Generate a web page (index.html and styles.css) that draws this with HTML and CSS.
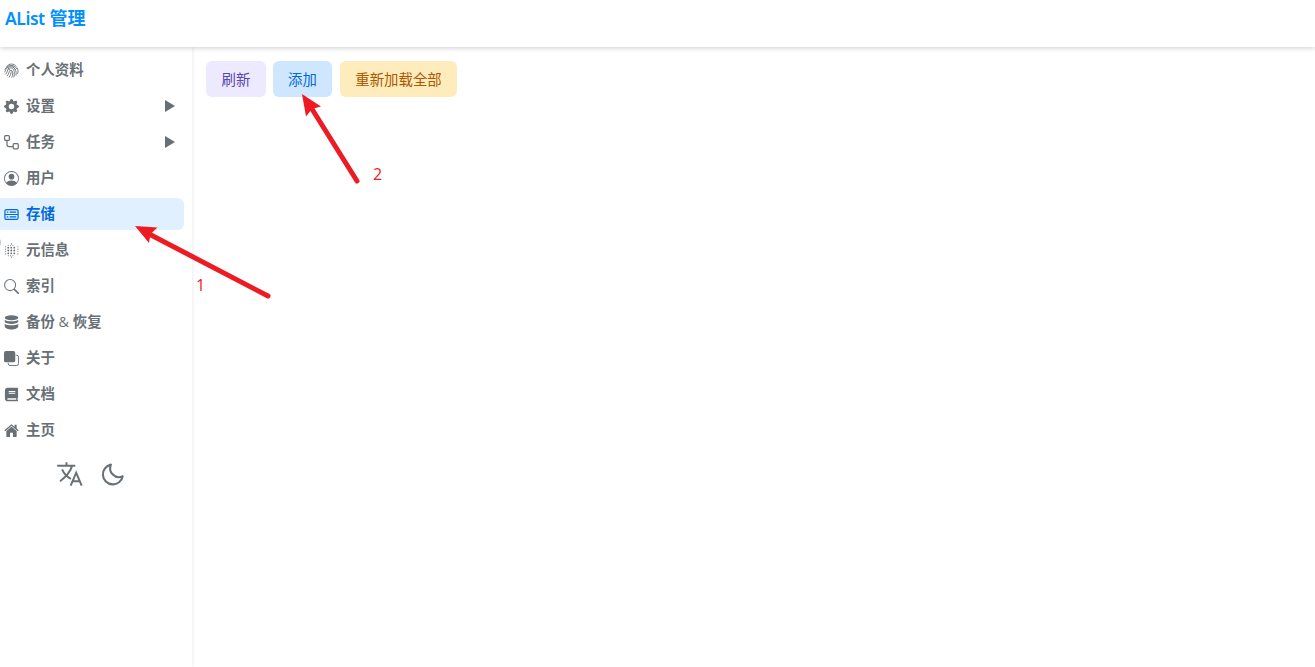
FILE: index.html
```
<!DOCTYPE html>
<html lang="zh-CN">
<head>
  <meta charset="UTF-8" />
  <meta name="viewport" content="width=device-width, initial-scale=1.0" />
  <title>AList 管理</title>
  <link rel="stylesheet" href="styles.css">
</head>
<body>
  <header class="header">
    <span class="title"><span class="brand">AList</span> 管理</span>
  </header>
  <div class="layout">
    <nav class="sidebar">
      <a class="item">
        <svg viewBox="0 0 16 16" fill="none" stroke="currentColor" stroke-width=".95" stroke-linecap="round"><path d="M3 3.600C5 .2 11 .2 13 3.600M1.200 6.500C3.500 1.500 11 1 13.500 6M.9 9.500C2 3 9.500 2 12 7c1 2 1.200 4 .8 6M1.700 12c2.300-1.500 1.500-4.500 3.300-6 3-2 5.800.3 6 4.300.1 2 0 3.300-.5 4.700M3.200 13.800c2.700-2 1.600-4.700 3.100-5.800 1.700-.9 2.900.5 3 2.600 0 1.800-.3 3.300-.9 4.600M5.500 15c1.600-2 2-4 2.200-5.800M14.300 5.500c.9 2 .9 4 .2 5.700M4 4.500l2 3M9 3l3 4"/></svg>
        <span>个人资料</span>
      </a>
      <a class="item">
        <svg viewBox="0 0 16 16" fill="currentColor"><path fill-rule="evenodd" d="M9.405 1.050c-.413-1.400-2.397-1.400-2.810 0l-.1.340a1.464 1.464 0 0 1-2.105.872l-.310-.170c-1.283-.698-2.686.705-1.987 1.987l.169.311c.446.820.023 1.841-.872 2.105l-.340.100c-1.400.413-1.400 2.397 0 2.810l.340.100a1.464 1.464 0 0 1 .872 2.105l-.170.310c-.698 1.283.705 2.686 1.987 1.987l.311-.169a1.464 1.464 0 0 1 2.105.872l.100.340c.413 1.400 2.397 1.400 2.810 0l.100-.340a1.464 1.464 0 0 1 2.105-.872l.310.170c1.283.698 2.686-.705 1.987-1.987l-.169-.311a1.464 1.464 0 0 1 .872-2.105l.340-.100c1.400-.413 1.400-2.397 0-2.810l-.340-.100a1.464 1.464 0 0 1-.872-2.105l.170-.310c.698-1.283-.705-2.686-1.987-1.987l-.311.169a1.464 1.464 0 0 1-2.105-.872zM8 10.930a2.929 2.929 0 1 1 0-5.860 2.929 2.929 0 0 1 0 5.858z"/></svg>
        <span>设置</span>
        <i class="caret"></i>
      </a>
      <a class="item">
        <svg viewBox="0 0 16 16" fill="none" stroke="currentColor" stroke-width="1.300"><rect x=".7" y=".7" width="5" height="5" rx="1"/><rect x="9.800" y="9.300" width="5.400" height="5.400" rx="1"/><path d="M3.200 5.700v4.400a2.200 2.200 0 0 0 2.200 2.200h4.400"/></svg>
        <span>任务</span>
        <i class="caret"></i>
      </a>
      <a class="item">
        <svg viewBox="0 0 16 16" fill="currentColor"><path d="M11 6a3 3 0 1 1-6 0 3 3 0 0 1 6 0z"/><path fill-rule="evenodd" d="M0 8a8 8 0 1 1 16 0A8 8 0 0 1 0 8zm8-7a7 7 0 0 0-5.468 11.370C3.242 11.226 4.805 10 8 10s4.757 1.225 5.468 2.370A7 7 0 0 0 8 1z"/></svg>
        <span>用户</span>
      </a>
      <a class="item active">
        <svg viewBox="0 0 16 16" fill="none" stroke="currentColor" stroke-width="1.300"><rect x="1" y="2.700" width="14" height="10.600" rx="1.500"/><path d="M1 8h14M3 5.400h1.600M6 5.400h7M3 10.600h1.600M6 10.600h7"/></svg>
        <span>存储</span>
      </a>
      <a class="item">
        <svg viewBox="0 0 16 16" fill="none" stroke="currentColor" stroke-linecap="round"><path d="M4.500 5h7.500M4.500 8h7.500M4.500 11h7.500" stroke-width="1.900" stroke-dasharray=".1 3.100"/><path d="M1.500 4v8M14.800 4v8M4.500 2.500h7.500M4.500 13.600h7.500M8 .9v.1M8 15v.1" stroke-width="1.100" stroke-dasharray=".1 2.400"/></svg>
        <span>元信息</span>
      </a>
      <a class="item">
        <svg viewBox="0 0 16 16" fill="none" stroke="currentColor"><circle cx="6.500" cy="6.500" r="5.900" stroke-width="1.100"/><path d="M11 11l4.200 4.200" stroke-width="1.800" stroke-linecap="round"/></svg>
        <span>索引</span>
      </a>
      <a class="item">
        <svg viewBox="0 0 16 16" fill="currentColor"><ellipse cx="8" cy="3" rx="7.200" ry="2.700"/><path d="M.8 5c2 2.200 12.400 2.200 14.400 0v2.300c-1 3-13.400 3-14.400 0z"/><path d="M.8 9.200c2 2.200 12.400 2.200 14.400 0v3c-1 4.200-13.400 4.200-14.400 0z"/></svg>
        <span>备份 <span class="amp">&amp;</span> 恢复</span>
      </a>
      <a class="item">
        <svg viewBox="0 0 16 16"><rect width="12" height="12" rx="2" fill="currentColor"/><path d="M12.500 4.500h1a2 2 0 0 1 2 2v7a2 2 0 0 1-2 2h-7a2 2 0 0 1-2-2v-1" fill="none" stroke="currentColor"/></svg>
        <span>关于</span>
      </a>
      <a class="item">
        <svg viewBox="0 0 16 16" fill="currentColor"><path fill-rule="evenodd" d="M4 .8h10.200q.8 0 .8.800v9.600q0 .5-.5.8v1.900q.5.100.5.700t-.7.600H4a3 3 0 0 1-3-3V3.800a3 3 0 0 1 3-3zM5 4.200v1h7v-1zM5 6.200v1h7v-1zM4 12a1 1 0 0 0 0 1.700h9V12z"/></svg>
        <span>文档</span>
      </a>
      <a class="item">
        <svg viewBox="0 0 16 16" fill="currentColor"><path d="M8 4l5.500 4.600v5.500q0 .8-.8.8H9.600v-4.500H6.400v4.500H3.300q-.8 0-.8-.8V8.600z"/><path d="M.8 8.300L8 2.200l7.200 6.100" fill="none" stroke="currentColor" stroke-width="1.500"/><path d="M11.300 1.800h2.200v5l-2.200-2z"/></svg>
        <span>主页</span>
      </a>
      <div class="tools">
        <svg class="tool" viewBox="0 0 24 24" fill="none" stroke="currentColor" stroke-width="1.700"><path d="M1 5h15.500M9 2v3M13.800 5C12.500 10 8.500 14.500 3.500 18.200M5.200 8c1.500 3.400 4.200 6.300 7.600 8.300M12.600 22L17.300 10.900 22 22M14.200 18.200h6.200"/></svg>
        <svg class="tool moon" viewBox="0 0 24 24" fill="none" stroke="currentColor" stroke-width="2" stroke-linejoin="round"><path d="M10.500 2.500A9.600 9.600 0 1 0 21.800 13.700Q16.500 16.200 12.300 12T10.500 2.500z"/></svg>
      </div>
    </nav>
    <main class="main">
      <button class="btn refresh">刷新</button>
      <button class="btn add">添加</button>
      <button class="btn reload">重新加载全部</button>
    </main>
  </div>
  <div class="handle"></div>
  <svg class="arrows" viewBox="0 0 1315 667" fill="#ed1c24" stroke="#ed1c24">
    <path d="M357 181L312 109M268 296L151 235" stroke-width="5" stroke-linecap="round"/>
    <path d="M302 94l19 12.500-9 2.500-6 7.500zM135 226l22.500 1.500-7 6.500-1.500 9z" stroke="none"/>
  </svg>
  <span class="mark mark-1">1</span>
  <span class="mark mark-2">2</span>
</body>
</html>
```
FILE: styles.css
```
* {
  box-sizing: border-box;
}
body {
  margin: 0;
  height: 100vh;
  display: flex;
  flex-direction: column;
  overflow: hidden;
  background: #fff;
  color: #687076;
  font-family: 'Open Sans', 'Noto Sans CJK SC', sans-serif;
  font-size: 14.4px;
}
.header {
  position: relative;
  z-index: 1;
  height: 47px;
  flex-shrink: 0;
  padding: 4px 5px;
  background: #fff;
  box-shadow: 0 1px 5px rgba(0, 0, 0, 0.2);
}
.title {
  display: block;
  color: #0091ff;
  font-family: 'Noto Sans', 'Noto Sans CJK SC', sans-serif;
  font-size: 18px;
  font-weight: 700;
  line-height: 28px;
}
.brand {
  font-weight: 600;
  font-size: 17.5px;
  letter-spacing: -0.45px;
}
.layout {
  flex: 1;
  display: flex;
}
.sidebar {
  width: 192px;
  padding: 7px 8px 0 0;
  display: flex;
  flex-direction: column;
  gap: 4px;
  box-shadow: 1px 0 3px rgba(0, 0, 0, 0.07);
}
.item {
  height: 32px;
  padding: 0 9px 0 4px;
  display: flex;
  align-items: center;
  gap: 7px;
  border-radius: 0 6px 6px 0;
  font-weight: 700;
  line-height: 32px;
  cursor: pointer;
}
.item svg {
  width: 15px;
  height: 15px;
}
.amp {
  font-weight: 500;
}
.item.active {
  background: #e1f0ff;
  color: #006adc;
}
.caret {
  margin-left: auto;
  border-left: 10px solid #687076;
  border-top: 6px solid transparent;
  border-bottom: 6px solid transparent;
}
.tools {
  display: flex;
  justify-content: center;
  align-items: center;
  gap: 16px;
  padding: 10px 3px 0 0;
}
.tool {
  width: 28px;
  height: 28px;
}
.tool.moon {
  width: 25px;
  height: 25px;
}
.main {
  flex: 1;
  display: flex;
  align-items: flex-start;
  padding: 14px;
}
.btn {
  height: 36px;
  padding: 2px 0 0;
  border: none;
  border-radius: 6px;
  font-family: inherit;
  font-size: 14.4px;
  line-height: 34px;
  text-align: center;
  cursor: pointer;
}
.refresh {
  width: 60px;
  margin-right: 7px;
  background: #ede9fe;
  color: #5746af;
}
.add {
  width: 59px;
  margin-right: 8px;
  background: #cee7fe;
  color: #006adc;
}
.reload {
  width: 117px;
  background: #ffecbc;
  color: #ad5700;
}
.handle {
  position: absolute;
  left: -7px;
  top: 238px;
  width: 8px;
  height: 9px;
  border-radius: 4px;
  background: #c9c2ff;
}
.arrows {
  position: absolute;
  left: 0;
  top: 0;
  z-index: 2;
  width: 1315px;
  height: 667px;
  pointer-events: none;
}
.mark {
  position: absolute;
  z-index: 2;
  color: #ed1c24;
  font-size: 16px;
  line-height: 20px;
}
.mark-1 {
  left: 196px;
  top: 275px;
}
.mark-2 {
  left: 373px;
  top: 164px;
}
```
